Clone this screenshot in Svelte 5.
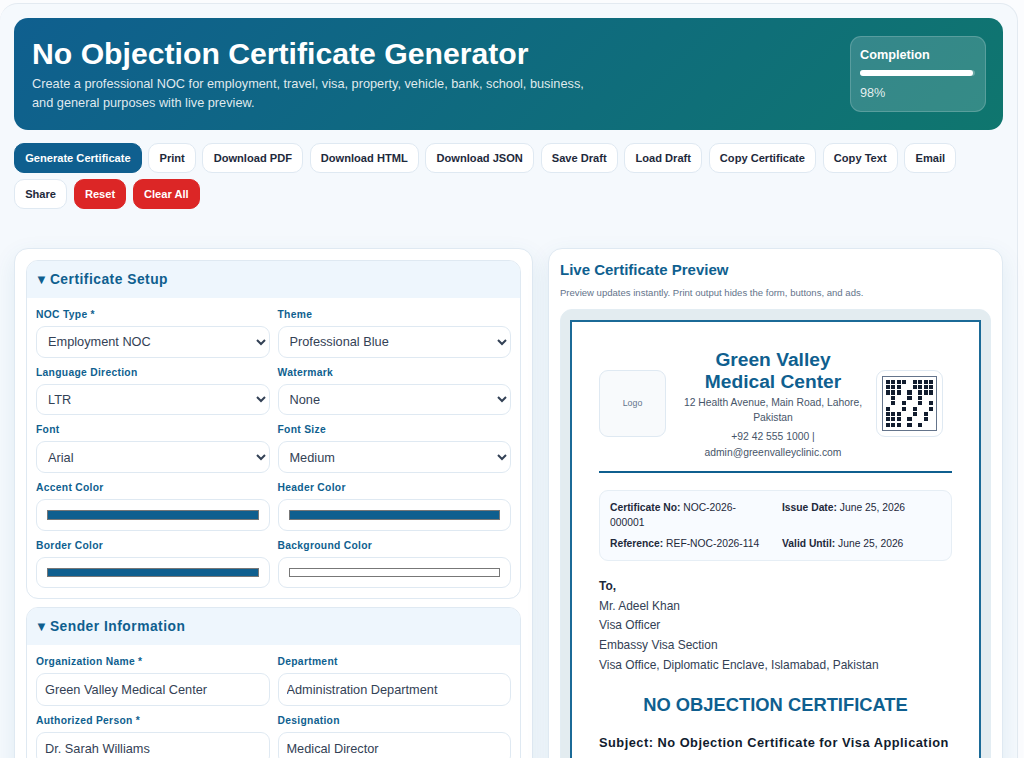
<script>
  const actions = [
    { label: 'Generate Certificate', kind: 'primary' },
    { label: 'Print' },
    { label: 'Download PDF' },
    { label: 'Download HTML' },
    { label: 'Download JSON' },
    { label: 'Save Draft' },
    { label: 'Load Draft' },
    { label: 'Copy Certificate' },
    { label: 'Copy Text' },
    { label: 'Email' },
    { label: 'Share' },
    { label: 'Reset', kind: 'danger' },
    { label: 'Clear All', kind: 'danger' }
  ];

  const setup = [
    { label: 'NOC Type *', type: 'select', value: 'Employment NOC' },
    { label: 'Theme', type: 'select', value: 'Professional Blue' },
    { label: 'Language Direction', type: 'select', value: 'LTR' },
    { label: 'Watermark', type: 'select', value: 'None' },
    { label: 'Font', type: 'select', value: 'Arial' },
    { label: 'Font Size', type: 'select', value: 'Medium' },
    { label: 'Accent Color', type: 'color', value: '#0f5f8f' },
    { label: 'Header Color', type: 'color', value: '#0f5f8f' },
    { label: 'Border Color', type: 'color', value: '#0f5f8f' },
    { label: 'Background Color', type: 'color', value: '#ffffff' }
  ];

  const sender = [
    { label: 'Organization Name *', type: 'text', value: 'Green Valley Medical Center' },
    { label: 'Department', type: 'text', value: 'Administration Department' },
    { label: 'Authorized Person *', type: 'text', value: 'Dr. Sarah Williams' },
    { label: 'Designation', type: 'text', value: 'Medical Director' }
  ];

  const qr = [
    '111101111',
    '111001111',
    '111010111',
    '010010100',
    '010100101',
    '100101001',
    '111001010',
    '111010010',
    '111010100'
  ].join('').split('');
</script>

{#snippet field(f)}
  <label class="field">
    <span class="field-label">{f.label}</span>
    {#if f.type === 'select'}
      <select class="control">
        <option>{f.value}</option>
      </select>
    {:else if f.type === 'color'}
      <input class="control swatch" type="color" value={f.value} />
    {:else}
      <input class="control text" type="text" value={f.value} />
    {/if}
  </label>
{/snippet}

<div class="page">
  <div class="wrap">
    <header class="hero">
      <div class="hero-text">
        <h1>No Objection Certificate Generator</h1>
        <p>Create a professional NOC for employment, travel, visa, property, vehicle, bank, school, business, and general purposes with live preview.</p>
      </div>
      <div class="completion">
        <strong>Completion</strong>
        <div class="track"><div class="fill" style="width: 98%"></div></div>
        <span>98%</span>
      </div>
    </header>

    <div class="toolbar">
      {#each actions as a}
        <button class="btn {a.kind ?? ''}">{a.label}</button>
      {/each}
    </div>

    <main class="columns">
      <div class="panel form-panel">
        <section class="group">
          <h2 class="group-head"><span class="caret">▼</span> Certificate Setup</h2>
          <div class="grid">
            {#each setup as f}
              {@render field(f)}
            {/each}
          </div>
        </section>
        <section class="group">
          <h2 class="group-head"><span class="caret">▼</span> Sender Information</h2>
          <div class="grid">
            {#each sender as f}
              {@render field(f)}
            {/each}
          </div>
        </section>
      </div>

      <div class="panel preview-panel">
        <h2 class="preview-title">Live Certificate Preview</h2>
        <p class="preview-sub">Preview updates instantly. Print output hides the form, buttons, and ads.</p>
        <div class="stage">
          <article class="cert">
            <div class="letterhead">
              <div class="logo">Logo</div>
              <div class="org">
                <h3>Green Valley Medical Center</h3>
                <p>12 Health Avenue, Main Road, Lahore, Pakistan</p>
                <p>+92 42 555 1000 | admin@greenvalleyclinic.com</p>
              </div>
              <div class="qr-box">
                <div class="qr">
                  {#each qr as c}
                    <i class:on={c === '1'}></i>
                  {/each}
                </div>
              </div>
            </div>

            <div class="meta">
              <div><b>Certificate No:</b> NOC-2026-000001</div>
              <div><b>Issue Date:</b> June 25, 2026</div>
              <div><b>Reference:</b> REF-NOC-2026-114</div>
              <div><b>Valid Until:</b> June 25, 2026</div>
            </div>

            <div class="to">
              <b>To,</b>
              <div>Mr. Adeel Khan</div>
              <div>Visa Officer</div>
              <div>Embassy Visa Section</div>
              <div>Visa Office, Diplomatic Enclave, Islamabad, Pakistan</div>
            </div>

            <h4 class="cert-title">NO OBJECTION CERTIFICATE</h4>
            <p class="subject">Subject: No Objection Certificate for Visa Application</p>
          </article>
        </div>
      </div>
    </main>
  </div>
</div>

<style>
  :global(html), :global(body) {
    margin: 0;
    background: #fbfcfe;
    overflow: hidden;
  }
  .page {
    height: 758px;
    overflow: hidden;
    padding-top: 3px;
    box-sizing: border-box;
    font-family: "Liberation Sans", Arial, sans-serif;
    color: #1e293b;
  }
  .wrap {
    width: 1018px;
    box-sizing: border-box;
    height: 800px;
    padding: 14px 14px 0;
    background: #f5f9fd;
    border: 1px solid #e3eaf1;
    border-left: 0;
    border-radius: 18px;
  }

  .hero {
    display: flex;
    justify-content: space-between;
    align-items: center;
    height: 112px;
    box-sizing: border-box;
    padding: 0 17px 0 18px;
    border-radius: 14px;
    background: linear-gradient(135deg, #0f5f8f, #0f766e);
    color: #fff;
  }
  .hero-text {
    width: 560px;
  }
  h1 {
    margin: 0 0 3px;
    font-size: 30.2px;
    line-height: 36px;
    white-space: nowrap;
  }
  .hero p {
    margin: 0;
    font-size: 12.75px;
    line-height: 18.5px;
    color: rgba(255, 255, 255, 0.88);
  }
  .completion {
    width: 136px;
    height: 76px;
    box-sizing: border-box;
    padding: 10px 10px 0 9px;
    border: 1px solid rgba(255, 255, 255, 0.18);
    border-radius: 11px;
    background: rgba(255, 255, 255, 0.16);
    font-size: 12.7px;
  }
  .completion strong {
    display: block;
    line-height: 16px;
  }
  .completion span {
    display: block;
    margin-top: 9px;
    line-height: 16px;
    color: rgba(255, 255, 255, 0.88);
  }
  .track {
    height: 6px;
    margin-top: 7px;
    border-radius: 6px;
    background: rgba(255, 255, 255, 0.25);
  }
  .fill {
    height: 100%;
    border-radius: 6px;
    background: #fff;
  }

  .toolbar {
    display: flex;
    flex-wrap: wrap;
    gap: 6px 6.5px;
    margin-top: 13px;
    height: 66px;
    align-content: flex-start;
  }
  .btn {
    height: 30px;
    padding: 0 10.2px;
    border: 1px solid #dfe9f2;
    border-radius: 10px;
    background: #fff;
    color: #1e293b;
    font: bold 11.1px "Liberation Sans", Arial, sans-serif;
  }
  .btn.primary {
    background: #0f5f8f;
    border-color: #0f5f8f;
    color: #fff;
  }
  .btn.danger {
    background: #dc2626;
    border-color: #dc2626;
    color: #fff;
  }

  .columns {
    display: grid;
    grid-template-columns: 519px 455px;
    gap: 15px;
    margin-top: 39px;
  }
  .panel {
    box-sizing: border-box;
    height: 560px;
    border: 1px solid #dfe9f2;
    border-radius: 14px;
    background: #fff;
    box-shadow: 0 8px 24px rgba(15, 95, 143, 0.09);
  }
  .form-panel {
    padding: 11px;
  }

  .group {
    margin-bottom: 8px;
    border: 1px solid #dfe9f2;
    border-radius: 12px;
    overflow: hidden;
  }
  .group-head {
    display: flex;
    align-items: center;
    gap: 1.5px;
    height: 37px;
    margin: 0;
    padding: 0 8px;
    background: #eef6fd;
    color: #0f5f8f;
    font-size: 13.8px;
    letter-spacing: 0.5px;
  }
  .caret {
    font-size: 13px;
  }
  .grid {
    display: grid;
    grid-template-columns: 1fr 1fr;
    gap: 8px;
    padding: 10px 9px 10px;
  }
  .field {
    display: block;
  }
  .field-label {
    display: block;
    margin-bottom: 5px;
    color: #0f5f8f;
    font-size: 10.3px;
    font-weight: bold;
    line-height: 13px;
    letter-spacing: 0.3px;
  }
  .control {
    display: block;
    width: 100%;
    box-sizing: border-box;
    height: 31.7px;
    border: 1px solid #dfe9f2;
    border-radius: 9px;
    background: #fff;
    color: #334155;
    font: 12.75px "Liberation Sans", Arial, sans-serif;
  }
  select.control {
    padding: 0 7px;
  }
  .text {
    height: 33px;
    padding: 0 8px;
  }
  .swatch {
    padding: 6px 8px;
  }

  .preview-panel {
    padding: 11px 11px 0;
  }
  .preview-title {
    margin: 0;
    color: #0f5f8f;
    font-size: 15px;
    line-height: 20px;
  }
  .preview-sub {
    margin: 7px 0 0;
    color: #64748b;
    font-size: 9.55px;
    line-height: 12px;
  }
  .stage {
    margin-top: 10px;
    padding: 10px 9px;
    border: 1px solid #e3edf3;
    border-radius: 12px;
    background: #e3ecf0;
    height: 500px;
  }
  .cert {
    box-sizing: border-box;
    height: 600px;
    padding: 27px 27px 0;
    border: 2px solid #1b6a97;
    background: #fff;
  }
  .letterhead {
    display: grid;
    grid-template-columns: 67px 1fr 67px;
    gap: 12px;
    align-items: center;
    padding: 0 9px 7px 0;
    border-bottom: 2px solid #0f5f8f;
  }
  .logo {
    display: flex;
    align-items: center;
    justify-content: center;
    height: 67px;
    margin-bottom: 6px;
    box-sizing: border-box;
    border: 1px solid #dfe9f2;
    border-radius: 9px;
    background: #f8fafc;
    color: #64748b;
    font-size: 8.8px;
  }
  .org {
    padding-left: 4px;
    text-align: center;
    color: #475569;
    font-size: 10.35px;
    line-height: 15.5px;
  }
  .org h3 {
    margin: 0 0 1.5px;
    color: #0f5f8f;
    font-size: 19.2px;
    line-height: 22px;
  }
  .org p {
    margin: 0 0 3.5px;
  }
  .qr-box {
    height: 67px;
    margin-bottom: 6px;
    box-sizing: border-box;
    padding: 5px;
    border: 1px solid #dfe9f2;
    border-radius: 9px;
  }
  .qr {
    display: grid;
    grid-template-columns: repeat(9, 1fr);
    grid-auto-rows: 1fr;
    gap: 1.3px;
    height: 100%;
    box-sizing: border-box;
    padding: 3px;
    border: 1.5px solid #64748b;
  }
  .qr i.on {
    background: #111c2e;
  }
  .meta {
    display: grid;
    grid-template-columns: 1fr 1fr;
    gap: 5px 13px;
    margin-top: 17px;
    padding: 9px 10px;
    border: 1px solid #e6eef5;
    border-radius: 9px;
    background: #f8fbff;
    font-size: 10.3px;
    line-height: 15.5px;
  }
  .to {
    margin-top: 16px;
    color: #334155;
    font-size: 11.95px;
    line-height: 19.7px;
  }
  .to b {
    color: #1e293b;
  }
  .cert-title {
    margin: 17px 0 0;
    text-align: center;
    color: #0f5f8f;
    font-size: 18.35px;
    line-height: 24px;
  }
  .subject {
    margin: 18px 0 0;
    color: #111c2e;
    font-size: 12.8px;
    font-weight: bold;
    letter-spacing: 0.5px;
  }
</style>
